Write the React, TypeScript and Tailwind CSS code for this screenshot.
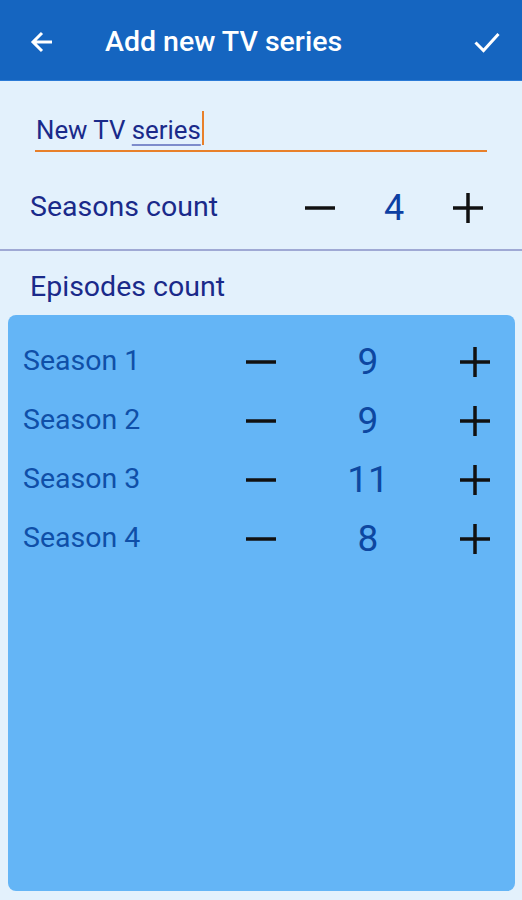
import React from "react";

const Minus = () => (
  <svg width="30" height="30" viewBox="0 0 30 30">
    <line x1="0" y1="15" x2="30" y2="15" stroke="#111" strokeWidth="3.5" />
  </svg>
);

const Plus = () => (
  <svg width="30" height="30" viewBox="0 0 30 30">
    <line x1="0" y1="15" x2="30" y2="15" stroke="#111" strokeWidth="3.5" />
    <line x1="15" y1="0" x2="15" y2="30" stroke="#111" strokeWidth="3.5" />
  </svg>
);

const seasons = [
  { name: "Season 1", episodes: 9 },
  { name: "Season 2", episodes: 9 },
  { name: "Season 3", episodes: 11 },
  { name: "Season 4", episodes: 8 },
];

export default function App() {
  return (
    <div className="w-[522px] h-[900px] bg-[#e3f1fc] flex flex-col font-['Roboto',sans-serif]">
      <div className="h-[81px] shrink-0 bg-[#1565c0] border-b border-[#2a7ad6] flex items-center px-[30px] pt-[4px]">
        <svg width="24" height="24" viewBox="0 0 24 24" className="shrink-0">
          <path d="M22 12H3M12 3L3 12l9 9" fill="none" stroke="#fff" strokeWidth="3" strokeLinejoin="miter" />
        </svg>
        <div className="ml-[51px] flex-1 text-white text-[28.5px] font-medium">Add new TV series</div>
        <svg width="26" height="22" viewBox="0 0 26 22" className="mr-[-8px]">
          <path d="M1.5 11.5l8 8L24.5 3" fill="none" stroke="#fff" strokeWidth="3" />
        </svg>
      </div>

      <div className="pt-[31px] pl-[35px] pr-[35px]">
        <div className="relative h-[40px] border-b-2 border-[#e8802a] flex items-start pl-px">
          <span className="text-[25.8px] text-[#1a2a8a] leading-[37px]">
            New TV <span className="underline decoration-2 decoration-[#7d8ccb] underline-offset-[5px]">series</span>
          </span>
          <span className="mt-[-1px] ml-px w-[2px] h-[34px] bg-[#e8802a]" />
        </div>
      </div>

      <div className="h-[97px] flex items-center pl-[30px] pr-[39px] pt-[14px]">
        <div className="flex-1 text-[28.5px] text-[#1a2a8a]">Seasons count</div>
        <Minus />
        <div className="w-[118px] text-center text-[36px] text-[#0d3fa3]">4</div>
        <Plus />
      </div>

      <div className="h-[2px] bg-[#9fa9d4]" />

      <div className="h-[64px] flex items-center pl-[30px] pt-[9px]">
        <span className="text-[28.5px] text-[#1a2a8a]">Episodes count</span>
      </div>

      <div className="ml-[8px] mr-[7px] h-[576px] rounded-[8px] bg-[#64b5f6] pt-[17px]">
        {seasons.map((s) => (
          <div key={s.name} className="h-[59px] flex items-center pl-[15px] pr-[25px]">
            <div className="flex-1 text-[28.5px] text-[#0f4fa8]">{s.name}</div>
            <Minus />
            <div className="w-[184px] text-center text-[37px] text-[#0d47a1]">{s.episodes}</div>
            <Plus />
          </div>
        ))}
      </div>
    </div>
  );
}
